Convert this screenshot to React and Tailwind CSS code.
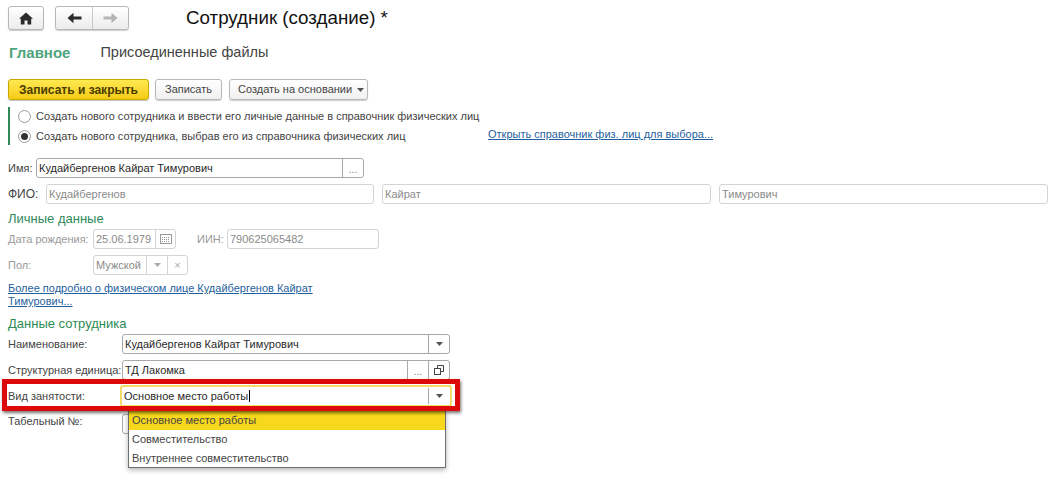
import { useState } from "react";

const HomeIcon = () => (
  <svg width="14" height="13" viewBox="0 0 14 13" fill="#2b2b2b">
    <path d="M7 0.5 L14 6.8 L12.2 6.8 L12.2 12.5 L8.5 12.5 L8.5 8.5 L5.5 8.5 L5.5 12.5 L1.8 12.5 L1.8 6.8 L0 6.8 Z" />
  </svg>
);

const ArrowIcon = ({ dir, color }) => (
  <svg width="15" height="12" viewBox="0 0 15 12" fill={color}>
    {dir === "left" ? (
      <path d="M0.5 6 L6.5 0.8 L6.5 4.4 L14.5 4.4 L14.5 7.6 L6.5 7.6 L6.5 11.2 Z" />
    ) : (
      <path d="M14.5 6 L8.5 0.8 L8.5 4.4 L0.5 4.4 L0.5 7.6 L8.5 7.6 L8.5 11.2 Z" />
    )}
  </svg>
);

const Caret = ({ color = "#555" }) => (
  <svg width="7" height="4" viewBox="0 0 7 4" fill={color}>
    <path d="M0 0 H7 L3.5 4 Z" />
  </svg>
);

const CalendarIcon = () => (
  <svg width="12" height="10" viewBox="0 0 12 10" fill="none" stroke="#9a9a9a">
    <rect x="0.5" y="0.5" width="11" height="9" />
    <path d="M2 3.5 H10 M2 5.5 H10 M2 7.5 H10" strokeDasharray="1 1" />
  </svg>
);

const CopyIcon = () => (
  <svg width="10" height="10" viewBox="0 0 10 10" fill="none" stroke="#444">
    <path d="M3.5 3 V0.5 H9.5 V6.5 H7" />
    <rect x="0.5" y="3.5" width="6" height="6" />
  </svg>
);

// input box with trailing cells split off by thin dividers
const Field = ({ className = "", text, muted, cells = [] }) => (
  <div
    className={`flex h-[20px] items-stretch rounded-[3px] border bg-white ${
      muted ? "border-[#d4d4d4]" : "border-[#a8a8a8]"
    } ${className}`}
  >
    <div
      className={`flex-1 overflow-hidden whitespace-nowrap pl-[2px] text-[11px] leading-[18px] ${
        muted ? "text-[#8a8a8a]" : "text-[#2a2a2a]"
      }`}
    >
      {text}
    </div>
    {cells.map((cell, i) => (
      <div
        key={i}
        className={`flex items-center justify-center border-l ${
          muted ? "border-[#d4d4d4]" : "border-[#a8a8a8]"
        }`}
        style={{ width: cell.width }}
      >
        {cell.icon}
      </div>
    ))}
  </div>
);

const Label = ({ className = "", children, muted }) => (
  <div
    className={`shrink-0 whitespace-nowrap text-[11px] leading-[20px] ${
      muted ? "text-[#9a9a9a]" : "text-[#444]"
    } ${className}`}
  >
    {children}
  </div>
);

const Dots = ({ color = "#777" }) => (
  <span className="relative top-[2px] text-[10px] leading-none" style={{ color }}>
    ...
  </span>
);

const GhostButton = ({ className = "", children }) => (
  <button className={`flex h-[21px] items-center rounded-[3px] border border-[#b8b8b8] bg-gradient-to-b from-white to-[#f0f0f0] text-[11px] text-[#444] shadow-[0_1px_1px_rgba(0,0,0,0.2)] ${className}`}>
    {children}
  </button>
);

const Radio = ({ checked }) => (
  <span className="flex h-[13px] w-[13px] shrink-0 items-center justify-center rounded-full border border-[#9a9a9a] bg-white">
    {checked && <span className="h-[7px] w-[7px] rounded-full bg-[#333]" />}
  </span>
);

const options = ["Основное место работы", "Совместительство", "Внутреннее совместительство"];

export default function App() {
  const [employment, setEmployment] = useState(options[0]);

  return (
    <div className="h-[491px] w-[1055px] overflow-hidden bg-white pl-[8px] pt-[6px] font-['Liberation_Sans',Arial,sans-serif]">
      {/* Top bar */}
      <div className="flex h-[24px] items-center">
        <button className="flex h-[24px] w-[36px] items-center justify-center rounded-[3px] border border-[#b8b8b8] bg-gradient-to-b from-white to-[#ececec] shadow-[0_1px_1px_rgba(0,0,0,0.2)]">
          <HomeIcon />
        </button>
        <div className="ml-[11px] flex h-[24px] w-[74px] rounded-[3px] border border-[#b8b8b8] bg-gradient-to-b from-white to-[#ececec] shadow-[0_1px_1px_rgba(0,0,0,0.2)]">
          <div className="flex w-[37px] items-center justify-center border-r border-[#c8c8c8]">
            <ArrowIcon dir="left" color="#2b2b2b" />
          </div>
          <div className="flex flex-1 items-center justify-center">
            <ArrowIcon dir="right" color="#b5b5b5" />
          </div>
        </div>
        <h1 className="ml-[57px] whitespace-nowrap text-[18.75px] font-normal leading-[24px] text-[#111]">
          Сотрудник (создание) *
        </h1>
      </div>

      {/* Tabs */}
      <div className="mt-[14px] flex h-[18px] items-center">
        <span className="ml-px text-[15px] font-bold text-[#4fa57e]">Главное</span>
        <span className="ml-[30px] text-[14.5px] text-[#444]">Присоединенные файлы</span>
      </div>

      {/* Command bar */}
      <div className="mt-[17px] flex">
        <button className="flex h-[21px] w-[141px] items-center justify-center rounded-[3px] border border-[#c9a800] bg-gradient-to-b from-[#ffe94f] to-[#f5cb0a] text-[12px] font-bold text-[#4a3c00] shadow-[0_1px_1px_rgba(0,0,0,0.25)]">
          Записать и закрыть
        </button>
        <GhostButton className="ml-[6px] w-[67px] justify-center">Записать</GhostButton>
        <GhostButton className="ml-[7px] w-[139px] gap-[5px] pl-[8px]">
          Создать на основании
          <Caret />
        </GhostButton>
      </div>

      {/* Person source switch */}
      <div className="mt-[7px] flex h-[38px]">
        <div className="flex w-[415px] shrink-0 flex-col justify-between border-l-2 border-[#2e8b57] py-[1px] pl-[8px]">
          <label className="flex h-[16px] items-center gap-[5px] whitespace-nowrap text-[11px] text-[#444]">
            <Radio />
            Создать нового сотрудника и ввести его личные данные в справочник физических лиц
          </label>
          <label className="flex h-[16px] items-center gap-[5px] whitespace-nowrap text-[11px] text-[#444]">
            <Radio checked />
            Создать нового сотрудника, выбрав его из справочника физических лиц
          </label>
        </div>
        <a href="#" className="ml-[65px] mt-[20px] whitespace-nowrap text-[11px] leading-[14px] text-[#1f5f9e] underline">
          Открыть справочник физ. лиц для выбора...
        </a>
      </div>

      {/* Name */}
      <div className="mt-[13px] flex">
        <Label className="w-[28px]">Имя:</Label>
        <Field
          className="w-[328px]"
          text="Кудайбергенов Кайрат Тимурович"
          cells={[{ width: 21, icon: <Dots /> }]}
        />
      </div>
      <div className="mt-[6px] flex">
        <Label className="w-[38px] text-[12px]">ФИО:</Label>
        <Field muted className="w-[328px]" text="Кудайбергенов" />
        <Field muted className="ml-[8px] w-[329px]" text="Кайрат" />
        <Field muted className="ml-[8px] w-[329px]" text="Тимурович" />
      </div>

      {/* Personal data */}
      <h2 className="mt-[8px] text-[13px] font-normal leading-[14px] text-[#2e8b57]">Личные данные</h2>
      <div className="mt-[3px] flex">
        <Label muted className="w-[85px]">Дата рождения:</Label>
        <Field
          muted
          className="w-[83px]"
          text="25.06.1979"
          cells={[{ width: 20, icon: <CalendarIcon /> }]}
        />
        <Label muted className="ml-[21px] w-[30px]">ИИН:</Label>
        <Field muted className="w-[152px]" text="790625065482" />
      </div>
      <div className="mt-[6px] flex">
        <Label muted className="w-[85px]">Пол:</Label>
        <Field
          muted
          className="w-[95px]"
          text="Мужской"
          cells={[
            { width: 21, icon: <Caret color="#aaa" /> },
            { width: 20, icon: <span className="text-[11px] leading-none text-[#aaa]">×</span> },
          ]}
        />
      </div>
      <a href="#" className="mt-[7px] block w-[320px] text-[11px] leading-[13px] text-[#1f5f9e] underline">
        Более подробно о физическом лице Кудайбергенов Кайрат Тимурович...
      </a>

      {/* Employee data */}
      <h2 className="mt-[9px] text-[13px] font-normal leading-[14px] text-[#2e8b57]">Данные сотрудника</h2>
      <div className="mt-[3px] flex">
        <Label className="w-[114px]">Наименование:</Label>
        <Field
          className="w-[328px]"
          text="Кудайбергенов Кайрат Тимурович"
          cells={[{ width: 21, icon: <Caret /> }]}
        />
      </div>
      <div className="mt-[6px] flex">
        <Label className="w-[114px]">Структурная единица:</Label>
        <Field
          className="w-[328px]"
          text="ТД Лакомка"
          cells={[
            { width: 21, icon: <Dots /> },
            { width: 21, icon: <CopyIcon /> },
          ]}
        />
      </div>

      {/* Employment type, framed in red with its open list */}
      <div className="relative z-10 mt-[6px] flex">
        <Label className="w-[112px]">Вид занятости:</Label>
        <div className="flex h-[22px] w-[332px] -translate-y-px items-center rounded-[3px] border-2 border-[#f5dc6a] bg-white">
          <span className="flex-1 whitespace-nowrap pl-[2px] text-[11px] text-[#2a2a2a]">
            {employment}
            <span className="ml-px inline-block h-[12px] w-px translate-y-[2px] bg-black" />
          </span>
          <span className="flex h-[16px] w-[22px] items-center justify-center border-l border-[#a8a8a8]">
            <Caret />
          </span>
        </div>
        <ul className="absolute left-[120px] top-[25px] h-[57px] w-[318px] overflow-hidden border border-t-0 border-[#6f6f6f] bg-white text-[11px] leading-[19px] text-[#444] shadow-[0_2px_5px_rgba(0,0,0,0.3)]">
          {options.map((option) => (
            <li
              key={option}
              onClick={() => setEmployment(option)}
              className={`pl-[3px] ${option === employment ? "bg-[#f8d81c]" : ""}`}
            >
              {option}
            </li>
          ))}
        </ul>
        <div className="pointer-events-none absolute left-[-6px] top-[-7px] h-[32px] w-[458px] border-[5px] border-[#dc0a0a] shadow-[1px_2px_3px_rgba(0,0,0,0.55)]" />
      </div>

      <div className="mt-[6px] flex">
        <Label className="-mt-[3px] w-[114px]">Табельный №:</Label>
        <Field className="w-[20px]" text="" />
      </div>
    </div>
  );
}
